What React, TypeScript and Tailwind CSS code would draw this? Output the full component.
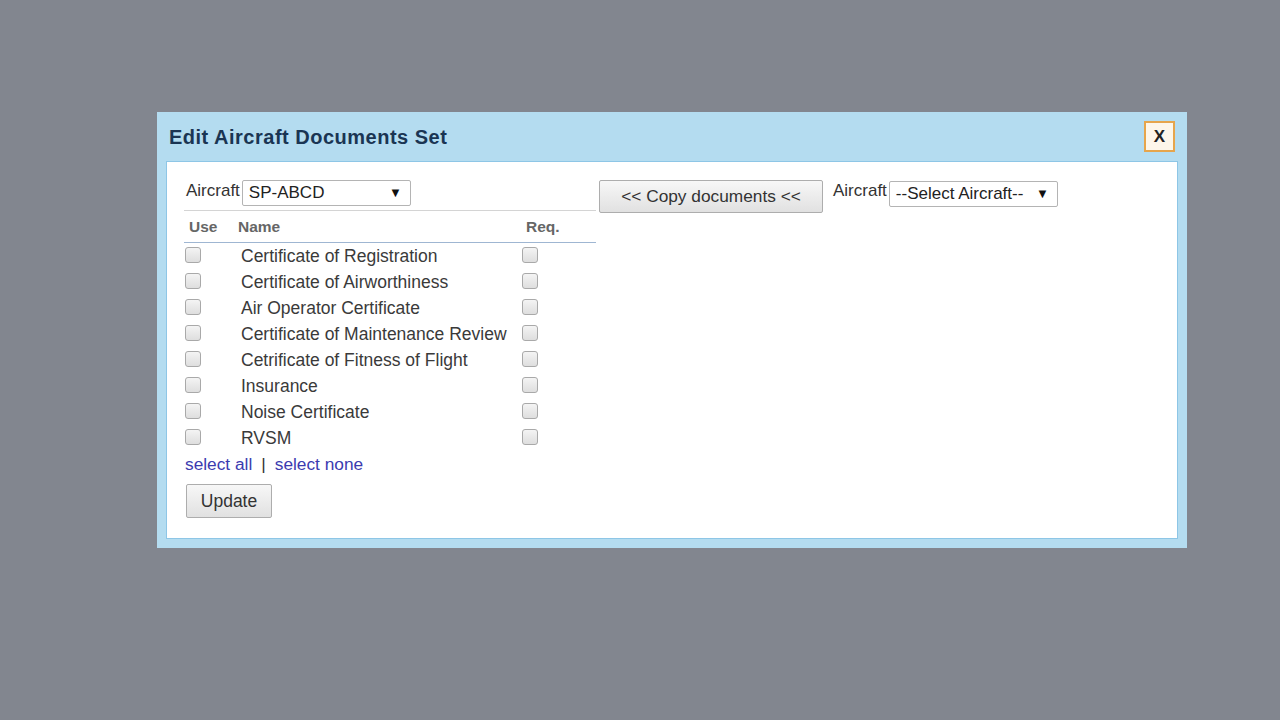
import React from "react";

const docs = [
  "Certificate of Registration",
  "Certificate of Airworthiness",
  "Air Operator Certificate",
  "Certificate of Maintenance Review",
  "Cetrificate of Fitness of Flight",
  "Insurance",
  "Noise Certificate",
  "RVSM",
];

function Box() {
  return (
    <span className="block w-[16px] h-[16px] rounded-[3px] border border-[#a9a9a9] bg-gradient-to-b from-[#f4f4f4] to-[#dedede]" />
  );
}

function Select({ value, w }: { value: string; w: string }) {
  return (
    <div
      className={`${w} h-[26px] flex items-center justify-between bg-white border border-[#b4b4b4] rounded-[2px] pl-[6px] pr-[8px] text-[17px] text-[#222]`}
    >
      <span>{value}</span>
      <span className="text-[13px] text-[#111]">▼</span>
    </div>
  );
}

export default function App() {
  return (
    <div
      className="w-[1280px] h-[720px] bg-[#82868f] pt-[112px] pl-[157px]"
      style={{ fontFamily: '"Liberation Sans", Arial, sans-serif' }}
    >
      <div className="w-[1030px] h-[436px] bg-[#b4dcf0] flex flex-col">
        <div className="h-[49px] flex items-center justify-between pl-[12px] pr-[12px]">
          <span className="text-[20px] font-bold text-[#1a3553] tracking-[0.5px]">
            Edit Aircraft Documents Set
          </span>
          <div className="w-[31px] h-[31px] border-2 border-[#e6a54c] bg-[#fdf6ea] flex items-center justify-center text-[17px] font-bold text-[#222]">
            X
          </div>
        </div>
        <div className="flex-1 mx-[9px] mb-[9px] bg-white border border-[#8ec6e6] flex pl-[17px] pt-[18px]">
          <div className="w-[412px] flex flex-col">
            <div className="flex items-start pl-[2px] pb-[4px] border-b border-[#d4d4d4]">
              <span className="text-[17px] text-[#333] mt-[-2px] mr-[2px]">Aircraft</span>
              <Select value="SP-ABCD" w="w-[169px]" />
            </div>
            <div className="flex items-center h-[32px] border-b border-[#9fb6d2] text-[15.5px] font-bold text-[#666]">
              <span className="w-[54px] pl-[5px]">Use</span>
              <span className="w-[288px]">Name</span>
              <span>Req.</span>
            </div>
            <div className="flex flex-col pt-[3px]">
              {docs.map((d) => (
                <div key={d} className="flex h-[26px]">
                  <div className="w-[57px] pl-[1px] pt-[1px]">
                    <Box />
                  </div>
                  <span className="w-[281px] text-[17.5px] text-[#3a3a3a] leading-[20px] whitespace-nowrap">{d}</span>
                  <div className="pt-[1px]">
                    <Box />
                  </div>
                </div>
              ))}
            </div>
            <div className="flex items-center gap-[9px] text-[17.3px] text-[#3b3bb0] mt-[1px] pl-[1px] h-[20px]">
              <span>select all</span>
              <span className="text-[#333]">|</span>
              <span>select none</span>
            </div>
            <div className="pt-[9px] pl-[2px]">
              <div className="w-[86px] h-[34px] flex items-center justify-center border border-[#adadad] rounded-[2px] bg-gradient-to-b from-[#f7f7f7] to-[#e1e1e1] text-[17.5px] text-[#333]">
                Update
              </div>
            </div>
          </div>
          <div className="flex items-start ml-[3px]">
            <div className="w-[224px] h-[33px] flex items-center justify-center border border-[#adadad] rounded-[2px] bg-gradient-to-b from-[#f7f7f7] to-[#e1e1e1] text-[17.3px] text-[#333]">
              &lt;&lt; Copy documents &lt;&lt;
            </div>
            <span className="text-[17px] text-[#333] ml-[10px] mt-[-2px] mr-[2px]">Aircraft</span>
            <div className="mt-[1px]">
              <Select value="--Select Aircraft--" w="w-[169px]" />
            </div>
          </div>
        </div>
      </div>
    </div>
  );
}
